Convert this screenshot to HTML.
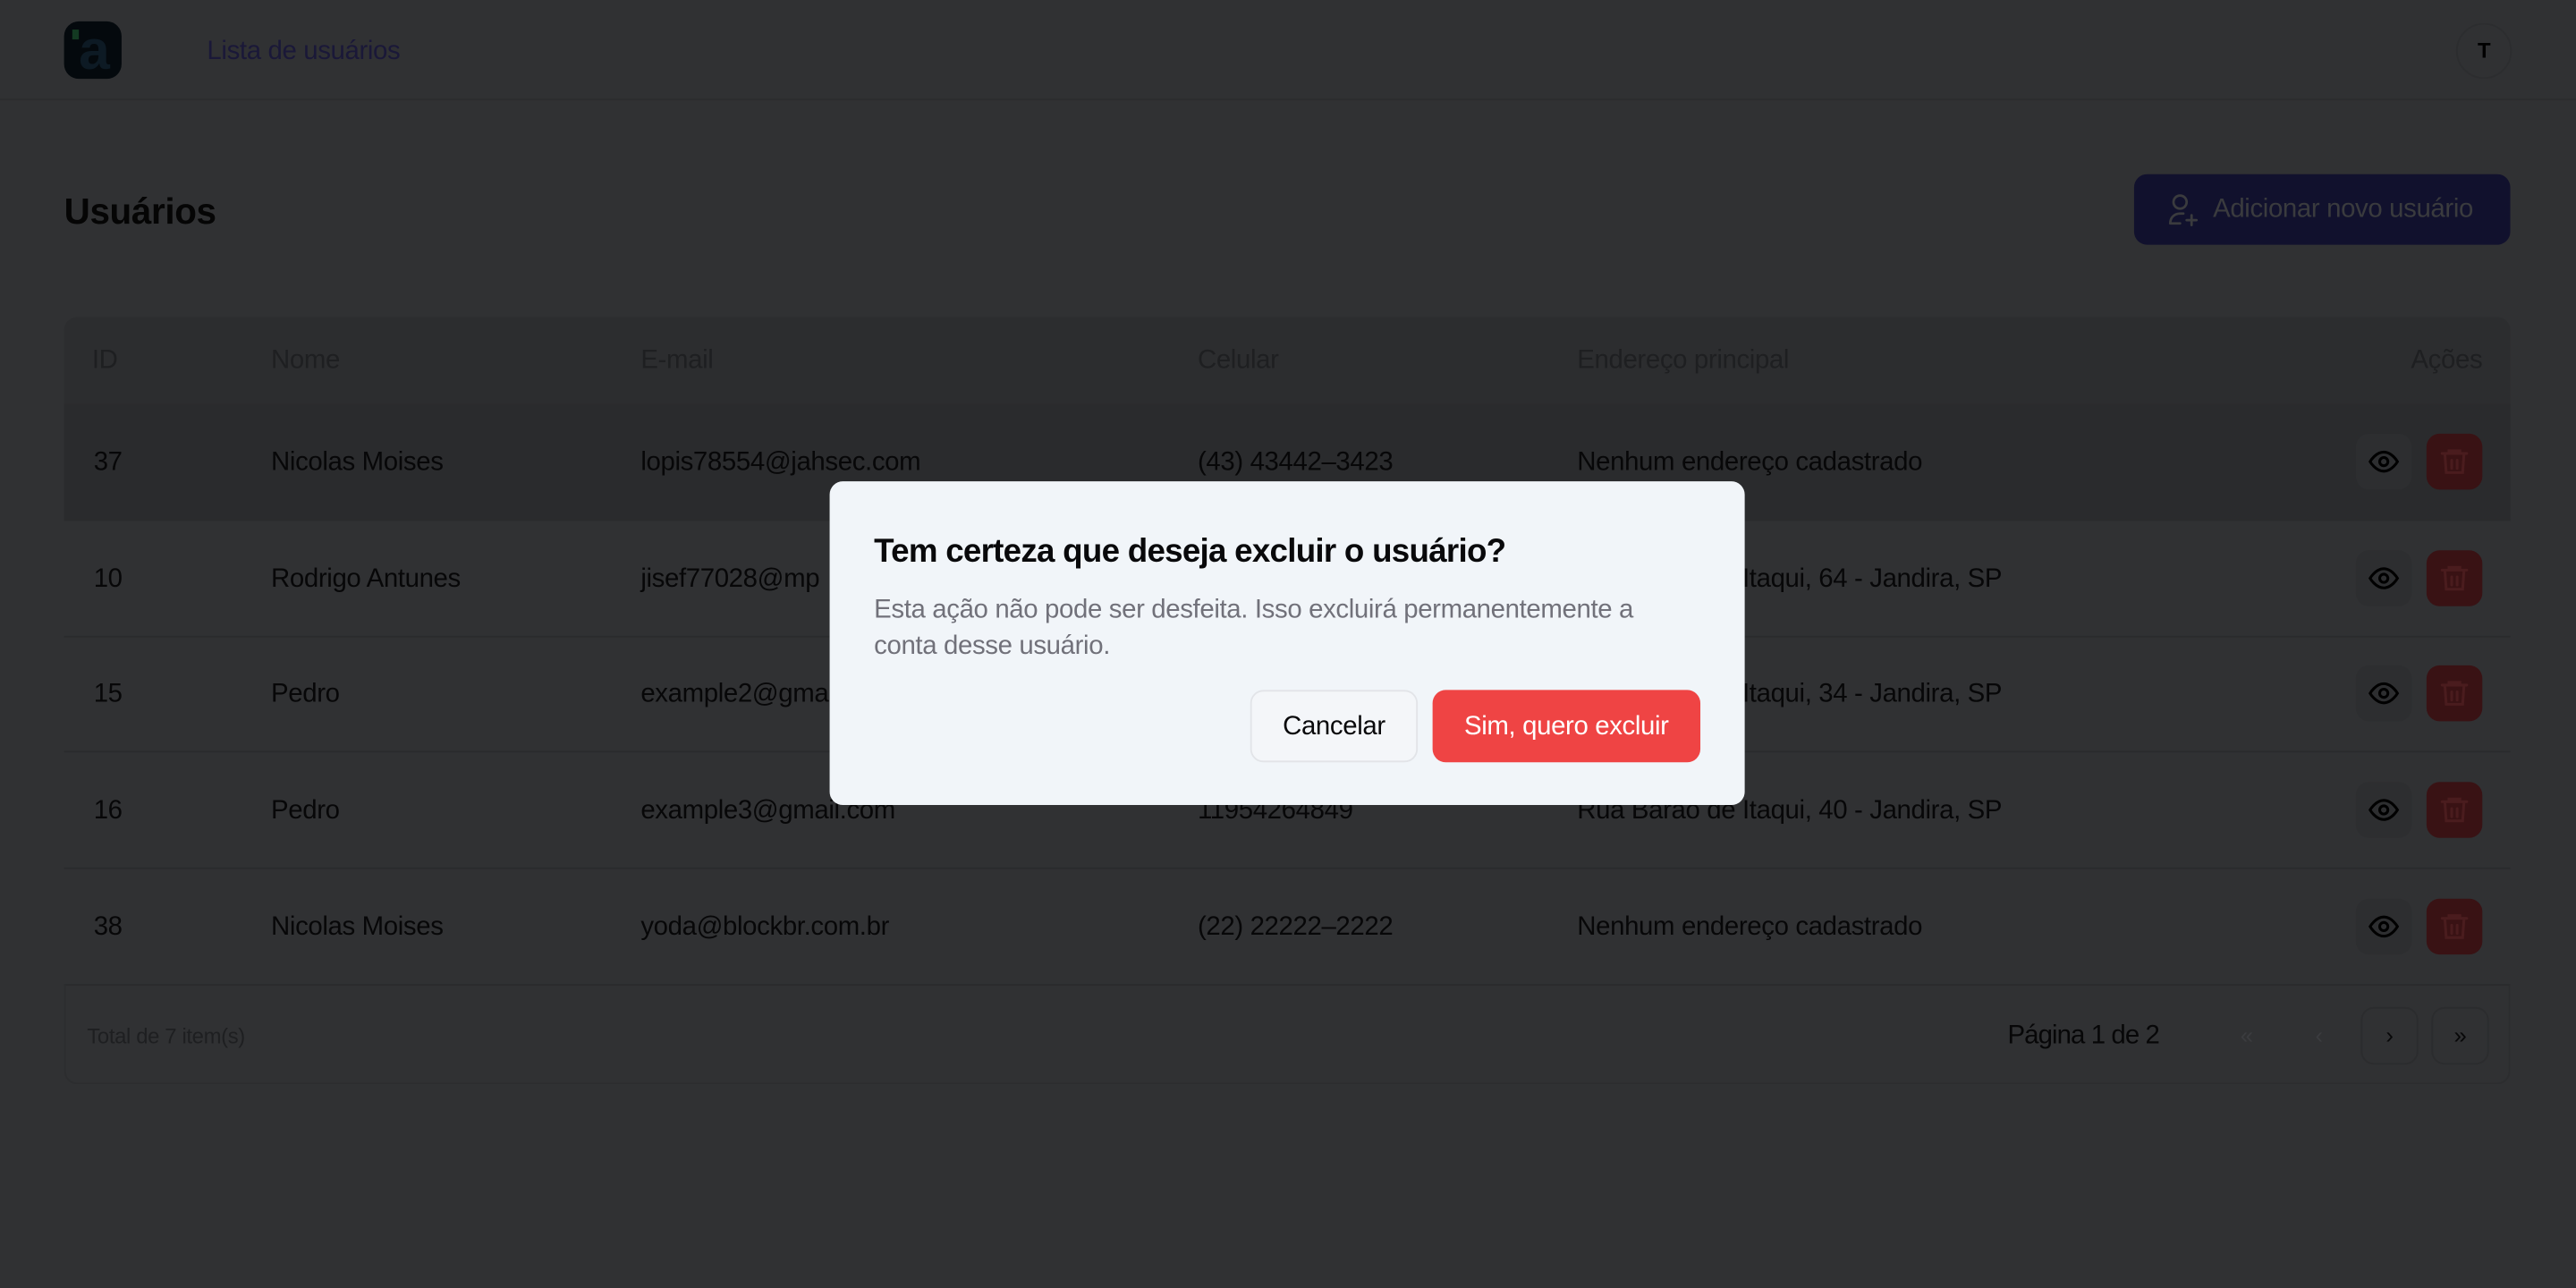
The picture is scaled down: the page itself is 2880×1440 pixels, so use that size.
<!DOCTYPE html>
<html><head><meta charset="utf-8"><style>
html,body{margin:0;padding:0;width:2880px;height:1440px;overflow:hidden;background:#303133;}
#w{width:1568px;height:784px;transform:scale(1.836735);transform-origin:0 0;position:relative;font-family:"Liberation Sans",sans-serif;color:#070708;letter-spacing:-0.2px}
.a{position:absolute}
.row{position:absolute;left:39px;width:1489px;height:70px;border-bottom:1px solid #2a2b2d;}
.row span{position:absolute;top:50%;transform:translateY(-44%);font-size:16px;white-space:nowrap;}
.eye{position:absolute;left:1395px;top:18px;width:34px;height:34px;border-radius:8px;background:#2d2e30;}
.tr{position:absolute;left:1438px;top:18px;width:34px;height:34px;border-radius:8px;background:#391214;}
.eye svg,.tr svg{position:absolute;left:7px;top:7px}
.pg{position:absolute;top:613px;width:33px;height:33px;border-radius:8px;border:1px solid #2b2c2e;color:#070708;font-size:14px;text-align:center;line-height:33px}
</style></head><body><div id="w">
<div class="a" style="left:0;top:0;width:1568px;height:60px;border-bottom:1px solid #2b2c2e"></div>
<div class="a" style="left:39px;top:13px;width:35px;height:35px;border-radius:9px;background:#04090d;overflow:hidden">
<div class="a" style="left:5px;top:5px;width:4px;height:6px;background:#133a22"></div>
<div class="a" style="left:9px;top:5px;width:20px;height:28px;color:#0d1a24;font-size:34px;line-height:26px;font-weight:bold">a</div></div>
<div class="a" style="left:126px;top:23px;font-size:16px;color:#1a1838">Lista de usuários</div>
<div class="a" style="left:1495px;top:14px;width:32px;height:32px;border-radius:50%;border:1px solid #2c2d2f;text-align:center;line-height:32px;font-size:13px;font-weight:bold;color:#000">T</div>
<div class="a" style="left:39px;top:116px;font-size:22px;font-weight:bold;color:#050505">Usuários</div>
<div class="a" style="left:1299px;top:106px;width:229px;height:43px;border-radius:8px;background:#11112d">
<svg class="a" style="left:18px;top:10px" width="24" height="24" viewBox="0 0 24 24" fill="none" stroke="#3a3b3e" stroke-width="1.5" stroke-linecap="round"><circle cx="10" cy="7" r="4"/><path d="M4 20c0-4 3-6 6-6h2M4 20h6M17 15v6M14 18h6"/></svg>
<div class="a" style="left:48px;top:13px;font-size:16px;color:#3a3b3e;white-space:nowrap">Adicionar novo usuário</div></div>
<div class="a" style="left:39px;top:193px;width:1489px;height:53px;border-radius:8px 8px 0 0;background:#2c2d2f"></div>
<div class="a" style="left:39px;top:193px;width:1489px;height:53px;font-size:16px;color:#1e1f21">
<span class="a" style="left:17px;top:18px">ID</span><span class="a" style="left:126px;top:18px">Nome</span><span class="a" style="left:351px;top:18px">E-mail</span><span class="a" style="left:690px;top:18px">Celular</span><span class="a" style="left:921px;top:18px">Endereço principal</span><span class="a" style="right:17px;top:18px">Ações</span></div>
<div class="row" style="top:246px;background:#2a2b2d"><span style="left:18px">37</span><span style="left:126px">Nicolas Moises</span><span style="left:351px">lopis78554@jahsec.com</span><span style="left:690px">(43) 43442–3423</span><span style="left:921px">Nenhum endereço cadastrado</span><div class="eye"></div><div class="tr"></div></div>
<div class="row" style="top:317px"><span style="left:18px">10</span><span style="left:126px">Rodrigo Antunes</span><span style="left:351px">jisef77028@mp</span><span style="left:921px">Rua Barão de Itaqui, 64 - Jandira, SP</span><div class="eye"></div><div class="tr"></div></div>
<div class="row" style="top:387px"><span style="left:18px">15</span><span style="left:126px">Pedro</span><span style="left:351px">example2@gma</span><span style="left:921px">Rua Barão de Itaqui, 34 - Jandira, SP</span><div class="eye"></div><div class="tr"></div></div>
<div class="row" style="top:458px"><span style="left:18px">16</span><span style="left:126px">Pedro</span><span style="left:351px">example3@gmail.com</span><span style="left:690px">11954264849</span><span style="left:921px">Rua Barão de Itaqui, 40 - Jandira, SP</span><div class="eye"></div><div class="tr"></div></div>
<div class="row" style="top:529px"><span style="left:18px">38</span><span style="left:126px">Nicolas Moises</span><span style="left:351px">yoda@blockbr.com.br</span><span style="left:690px">(22) 22222–2222</span><span style="left:921px">Nenhum endereço cadastrado</span><div class="eye"></div><div class="tr"></div></div>
<div class="a" style="left:39px;top:599px;width:1487px;height:60px;border:1px solid #2c2d2f;border-top:none;border-radius:0 0 8px 8px"></div>
<div class="a" style="left:53px;top:623px;font-size:13px;color:#1e1f21">Total de 7 item(s)</div>
<div class="a" style="left:1222px;top:622px;font-size:16px;letter-spacing:-0.5px">Página 1 de 2</div>
<div class="pg" style="left:1350px;border-color:transparent;color:#3b3c3f">«</div>
<div class="pg" style="left:1394px;border-color:transparent;color:#3b3c3f">‹</div>
<div class="pg" style="left:1437px">›</div>
<div class="pg" style="left:1480px">»</div>
<div class="a" style="left:505px;top:293px;width:557px;height:197px;border-radius:8px;background:#f1f5f9">
<div class="a" style="left:27px;top:32px;font-size:20px;font-weight:bold;color:#09090b;white-space:nowrap;letter-spacing:-0.4px">Tem certeza que deseja excluir o usuário?</div>
<div class="a" style="left:27px;top:68px;width:500px;font-size:16px;line-height:22px;color:#71717a">Esta ação não pode ser desfeita. Isso excluirá permanentemente a conta desse usuário.</div>
<div class="a" style="left:256px;top:127px;width:100px;height:42px;border:1px solid #e2e4e8;border-radius:8px;background:#f4f6f9;text-align:center;line-height:44px;font-size:16px;color:#09090b">Cancelar</div>
<div class="a" style="left:367px;top:127px;width:163px;height:44px;border-radius:8px;background:#ef4444;text-align:center;line-height:46px;font-size:16px;color:#fff">Sim, quero excluir</div>
</div>
</div>
<script>
document.querySelectorAll('.eye').forEach(e=>e.innerHTML='<svg width="20" height="20" viewBox="0 0 24 24" fill="none" stroke="#000" stroke-width="2"><path d="M2 12s4-7 10-7 10 7 10 7-4 7-10 7S2 12 2 12z"/><circle cx="12" cy="12" r="3"/></svg>');
document.querySelectorAll('.tr').forEach(e=>e.innerHTML='<svg width="20" height="20" viewBox="0 0 24 24" fill="none" stroke="#4a1c1e" stroke-width="2" stroke-linecap="round"><path d="M3 6h18M8 6V4h8v2M5 6l1 14h12l1-14M10 11v6M14 11v6"/></svg>');
</script>
</body></html>
